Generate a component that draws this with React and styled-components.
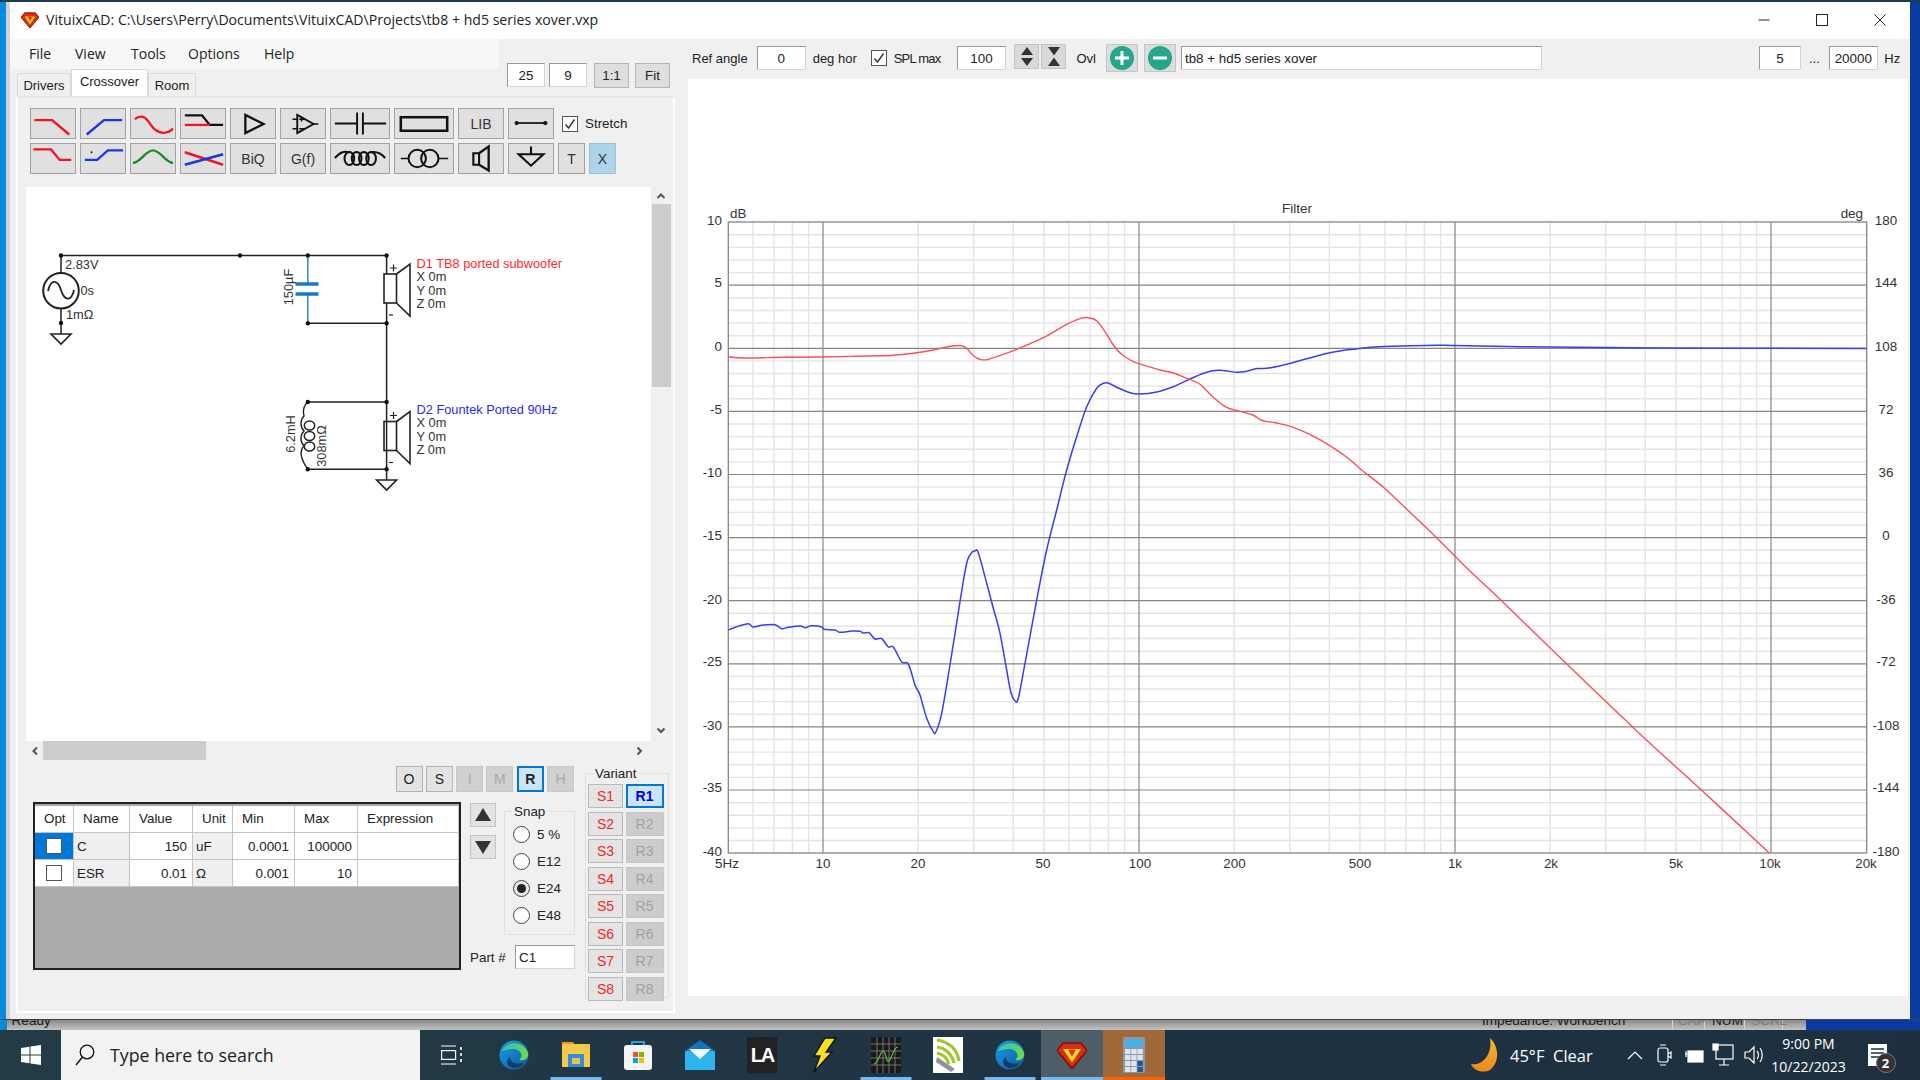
import React from "react";
import styled, { createGlobalStyle } from "styled-components";

const UI = '"Liberation Sans", Arial, sans-serif';
const SEGOE = '"Open Sans", "Noto Sans", sans-serif';

const Global = createGlobalStyle`
  html, body { margin: 0; padding: 0; background: #1c3d4d; overflow: hidden; }
  * { box-sizing: border-box; }
`;

const Screen = styled.div`
  width: 1920px; height: 1080px; display: flex; flex-direction: column;
  overflow: hidden; font-family: ${UI}; font-size: 13.4px; color: #222;
  border-top: 2px solid #1c3d4d; position: relative;
`;
const DesktopRow = styled.div`display: flex; height: 1017px;`;
const LeftStrip = styled.div`width: 10px; background: linear-gradient(90deg, #0a8adb 0 65%, #cfd3d6 65% 100%);`;
const RightStrip = styled.div`flex: 1; background: #0b3aa0;`;
const Win = styled.div`width: 1900px; display: flex; flex-direction: column; background: #f0f0f0;`;

const TitleBar = styled.div`height: 37px; background: #fff; display: flex; align-items: center; padding: 0 0 2px 11px;`;
const TitleText = styled.div`font-family: ${SEGOE}; font-size: 14.1px; color: #222; margin-left: 7px; white-space: nowrap; flex: 1;`;
const WinCtl = styled.div`width: 58px; height: 35px; display: flex; align-items: center; justify-content: center; position: relative; left: -1.5px;`;

const Body = styled.div`flex: 1; display: flex; min-height: 0;`;
const LeftPane = styled.div`width: 668px; display: flex; flex-direction: column;`;
const RightPane = styled.div`flex: 1; display: flex; flex-direction: column; padding-left: 10px;`;

const Head = styled.div`display: flex; height: 57px;`;
const HeadLeft = styled.div`width: 489px; display: flex; flex-direction: column;`;
const MenuBar = styled.div`height: 30px; background: #f7f7f7; display: flex; align-items: center; padding: 0 0 2px 19px; font-family: ${SEGOE}; font-size: 14px;`;
const MenuItem = styled.span`width: ${p => p.$w}px;`;
const Tabs = styled.div`display: flex; align-items: flex-end; padding-left: 7px; height: 27px; position: relative; z-index: 1;`;
const Tab = styled.div`
  width: ${p => p.$w}px; height: ${p => (p.$active ? 27 : 23)}px;
  background: ${p => (p.$active ? "#fff" : "#f0f0f0")};
  border: 1px solid #d9d9d9; border-bottom: none;
  display: flex; align-items: center; justify-content: center; font-size: 13px;
  padding-bottom: ${p => (p.$active ? 3 : 0)}px;
`;
const ZoomTools = styled.div`display: flex; margin: 24px 0 0 8px; align-items: flex-start;`;
const FieldBox = styled.div`
  width: ${p => p.$w}px; height: ${p => p.$h || 24}px; margin-left: ${p => p.$ml || 0}px;
  background: #fff; border: 1px solid #9a9a9a; border-right-color: #d5d5d5; border-bottom-color: #d5d5d5;
  display: flex; align-items: center; justify-content: ${p => p.$left ? "flex-start" : "center"};
  padding-left: ${p => p.$left ? 3 : 0}px; font-size: 13.4px; flex-shrink: 0;
`;
const PlainBtn = styled.div`
  width: ${p => p.$w}px; height: 25px; margin-left: ${p => p.$ml || 0}px;
  background: #dedede; border: 1.5px solid #b4b4b4; display: flex; align-items: center; justify-content: center; font-size: 13.4px;
`;

const Panel = styled.div`
  width: 659px; height: 917px; margin-left: 6px; background: #f0f0f0; border: 2px solid #fff; border-top-color: #e6e6e6;
  display: flex; flex-direction: column;
`;
const ToolRows = styled.div`display: flex; flex-direction: column; gap: 4px; padding: 10px 0 0 12px;`;
const ToolRow = styled.div`display: flex; gap: 4px; height: 31px; align-items: center;`;
const ToolBtn = styled.div`
  width: ${p => p.$w || 46}px; height: 31px; flex-shrink: 0;
  background: ${p => p.$on ? "#add4ea" : "#e0e0e0"}; border: 1.5px solid ${p => p.$on ? "#9fc0d4" : "#a2a2a2"};
  display: flex; align-items: center; justify-content: center; font-size: 14px; color: #333;
  margin-left: ${p => p.$ml || 0}px;
`;
const Stretch = styled.div`display: flex; align-items: center; gap: 7px; margin-left: 4px;`;
const CheckBox = styled.div`
  width: ${p => p.$s || 16}px; height: ${p => p.$s || 16}px; background: #fff; border: 1.5px solid #555;
  margin-left: ${p => p.$ml || 0}px;
  display: flex; align-items: center; justify-content: center; flex-shrink: 0;
`;

const Canvas = styled.div`
  display: grid; grid-template-columns: 625px 20px; grid-template-rows: 554px 19px;
  margin: 13px 0 0 8px; width: 645px;
`;
const Sheet = styled.div`background: #fff; height: 554px; line-height: 0;`;
const VScroll = styled.div`display: flex; flex-direction: column; align-items: center;`;
const ArrowCell = styled.div`width: 20px; height: 17px; display: flex; align-items: center; justify-content: center; margin-top: ${p => p.$auto ? "auto" : 0}; margin-bottom: ${p => p.$auto ? 3 : 0}px;`;
const VThumb = styled.div`width: 19px; height: 183px; background: #cdcdcd;`;
const HScroll = styled.div`display: flex; align-items: stretch;`;
const HArrow = styled.div`width: 17px; display: flex; align-items: center; justify-content: center; margin-left: ${p => p.$auto ? "auto" : 0}; margin-right: ${p => p.$auto ? 4 : 0}px;`;
const HThumb = styled.div`width: 163px; background: #cdcdcd;`;

const Lower = styled.div`display: flex; padding: 6px 0 0 15px; gap: 10px; align-items: flex-start;`;
const LowerLeft = styled.div`width: 542px; display: flex; flex-direction: column;`;
const ModeRow = styled.div`display: flex; justify-content: flex-end; gap: 3.3px; padding-right: 1px;`;
const ModeBtn = styled.div`
  width: 27px; height: 26px;
  background: ${p => p.$sel ? "#cce4f7" : p.$off ? "#d0d0d0" : "#e3e3e3"};
  border: ${p => p.$sel ? "2px solid #0078d7" : "1.5px solid " + (p.$off ? "#c8c8c8" : "#b2b2b2")};
  color: ${p => p.$off ? "#a9a9a9" : "#222"}; font-weight: ${p => p.$sel ? 700 : 400};
  display: flex; align-items: center; justify-content: center; font-size: 14px;
`;
const EditRow = styled.div`display: flex; margin-top: 10px;`;
const GridFrame = styled.div`width: 428px; height: 168px; background: #ababab; border: 2px solid #222; flex-shrink: 0;`;
const Table = styled.div`display: grid; grid-template-columns: 39px 56px 63px 40px 62px 63px 101px; grid-auto-rows: 27px; width: 424px; margin-top: 2px;`;
const Cell = styled.div`
  background: ${p => p.$bg || "#fff"}; border-right: 1.5px solid #c4c4c4; border-bottom: 1.5px solid #c4c4c4;
  display: flex; align-items: center; justify-content: ${p => p.$right ? "flex-end" : p.$center ? "center" : "flex-start"};
  padding: ${p => p.$right ? "0 5px 0 0" : p.$head ? "0 0 2px 9px" : p.$center ? "0" : "0 0 0 3px"};
`;
const Aside = styled.div`width: 105px; margin-left: 9px; display: flex; flex-direction: column;`;
const AsideTop = styled.div`display: flex; height: 133px;`;
const ArrowCol = styled.div`width: 26px; display: flex; flex-direction: column; gap: 8px; padding-top: 1px;`;
const ArrowBtn = styled.div`width: 26px; height: 24px; background: #e3e3e3; border: 1.5px solid #c6c6c6; display: flex; align-items: center; justify-content: center;`;
const Group = styled.fieldset`
  margin: ${p => p.$m || 0}; padding: ${p => p.$p || 0}; border: 1.5px solid #e0e0e0; width: ${p => p.$w}px; height: ${p => p.$h}px; min-width: 0;
`;
const GroupTitle = styled.legend`padding: 0 2px 0 2px; margin-left: ${p => p.$ml}px; font-size: 13.4px; line-height: 15px;`;
const RadioRow = styled.div`display: flex; align-items: center; gap: 7px; height: 27.1px;`;
const RadioDot = styled.div`
  width: 17px; height: 17px; border-radius: 50%; border: 1.5px solid #444; background: ${p => p.$on ? "#e8e8e8" : "#fff"};
  display: flex; align-items: center; justify-content: center;
`;
const RadioFill = styled.div`width: 9px; height: 9px; border-radius: 50%; background: #222;`;
const PartRow = styled.div`display: flex; align-items: center; margin-top: 10px; justify-content: space-between;`;
const VariantGrid = styled.div`display: grid; grid-template-columns: 35px 38px; column-gap: 2.5px; grid-auto-rows: 24px; row-gap: 3.5px; padding: 3px 0 0 2px;`;
const VarBtn = styled.div`
  background: ${p => p.$sel ? "#cce4f7" : p.$off ? "#cccccc" : "#e4e4e4"};
  border: ${p => p.$sel ? "2px solid #0078d7" : "1.5px solid " + (p.$off ? "#c6c6c6" : "#bababa")};
  color: ${p => p.$sel ? "#0000e0" : p.$off ? "#a2a2a2" : "#f02828"}; font-weight: ${p => p.$sel ? 700 : 400};
  display: flex; align-items: center; justify-content: center; font-size: 14px;
`;

const ChartBar = styled.div`height: 40px; display: flex; align-items: center; padding: 0 0 2px 4px; white-space: nowrap;`;
const BarLabel = styled.span`margin-left: ${p => p.$ml || 0}px; font-size: 13px; flex-shrink: 0; letter-spacing: ${p => p.$tight ? "-0.8px" : "normal"};`;
const SpinBtn = styled.div`width: 25px; height: 25px; margin-left: ${p => p.$ml || 0}px; margin-top: -3px; background: #d9d9d9; border: 1px solid #c4c4c4; display: flex; align-items: center; justify-content: center;`;
const RoundBtn = styled.div`width: 32px; height: 28px; margin-left: ${p => p.$ml || 0}px; background: #dcdcdc; border: 1px solid #c4c4c4; display: flex; align-items: center; justify-content: center;`;
const ChartSheet = styled.div`width: 1220px; height: 917px; background: #fff; line-height: 0;`;

const StatusRow = styled.div`height: 11px; display: flex; overflow: hidden; border-top: 1px solid #3f3f3f;`;
const StatusBlue = styled.div`width: ${p => p.$w}px; background: ${p => p.$c};`;
const StatusMain = styled.div`flex: 1; background: linear-gradient(180deg, #8a8a8a, #c2c2c2); display: flex; font-size: 13.6px; color: #222; line-height: 16px; overflow: hidden;`;
const StatusText = styled.span`
  margin-top: -7px; padding-top: 7px; padding-left: ${p => p.$pl || 0}px; height: 24px;
  color: ${p => p.$dim ? "#7d7d7d" : "#1a1a1a"}; white-space: nowrap; width: ${p => p.$w ? p.$w + "px" : "auto"}; flex-shrink: 0;
  border-right: ${p => p.$sep ? "1px solid #d4d4d4" : "none"};
`;
const StatusLabel = styled.span`position: relative; top: -7px;`;

const Taskbar = styled.div`height: 50px; display: flex; background: linear-gradient(90deg, #233b47, #1e3342 60%, #1e3040); color: #fff; align-items: stretch;`;
const StartCell = styled.div`width: 61px; display: flex; align-items: center; justify-content: center;`;
const SearchBox = styled.div`width: 359px; background: #f2f2f2; display: flex; align-items: center; padding-left: 14px; color: #222; font-family: ${SEGOE}; font-size: 17.8px; gap: 15px;`;
const TaskCell = styled.div`
  width: ${p => p.$w || 62}px; display: flex; align-items: center; justify-content: center; position: relative;
  background: ${p => p.$bg || "transparent"}; flex-shrink: 0;
`;
const TaskLine = styled.div`position: absolute; bottom: 0; height: 3px; background: ${p => p.$c || "#76b9ed"}; width: ${p => p.$w}; left: 50%; transform: translateX(-50%);`;
const Tray = styled.div`flex: 1; display: flex; align-items: center; padding-left: 305px; font-family: ${SEGOE};`;
const Weather = styled.span`font-size: 16.5px; margin-left: 10px; width: 110px; white-space: pre;`;
const TrayIcon = styled.div`width: 29.5px; display: flex; justify-content: center;`;
const Clock = styled.div`width: 90px; margin-left: -4px; text-align: center; font-size: 14px; line-height: 23px; margin-top: -1px;`;
const NotifyCell = styled.div`margin-left: 14px; position: relative; display: flex;`;
const Badge = styled.div`
  position: absolute; right: -8px; bottom: -7px; width: 20px; height: 20px; border-radius: 50%; background: #333; border: 1.5px solid #777;
  display: flex; align-items: center; justify-content: center; font-size: 13px; font-weight: 700; color: #fff;
`;

/* ---------- small drawings ---------- */
const Ic = ({ w = 46, h = 31, children }) => <svg width={w} height={h} viewBox={`0 0 ${w} ${h}`} fill="none" strokeLinejoin="miter">{children}</svg>;
const R = "#f5141e", B = "#1438e8", G = "#1a8a2a", K = "#111";
const ic = {
  lp: <Ic><path d="M3.5 12H22L40 27" stroke={R} strokeWidth="2.4" /></Ic>,
  hp: <Ic><path d="M6 27L24 12H43" stroke={B} strokeWidth="2.4" /></Ic>,
  apr: <Ic><path d="M4 11C10 6 15 8 20 16S30 26 36 25S42 22 44 21" stroke={R} strokeWidth="2.4" /></Ic>,
  shelf: <Ic><path d="M4 7H22L30 17H44" stroke={K} strokeWidth="2.4" /><path d="M4 17H30" stroke={R} strokeWidth="2.4" /></Ic>,
  play: <Ic><path d="M15 6.5V25.5L34 16Z" stroke={K} strokeWidth="2.4" /></Ic>,
  amp: <Ic><path d="M17 6.5V25.5L34 16Z" stroke={K} strokeWidth="2" /><path d="M34 16H39M12 11H17M12 21H17M19 11H24M21.5 8.5V13.5M19 21H24" stroke={K} strokeWidth="1.6" /></Ic>,
  cap: <Ic w={60}><path d="M4 15.5H27M27 4V27M33 4V27M33 15.5H57" stroke={K} strokeWidth="2" /></Ic>,
  res: <Ic w={60}><rect x="6" y="9" width="48" height="14" stroke={K} strokeWidth="2.6" /></Ic>,
  wire: <Ic><path d="M8 15H38" stroke={K} strokeWidth="1.8" /><circle cx="8" cy="15" r="2.2" fill={K} /><circle cx="38" cy="15" r="2.2" fill={K} /></Ic>,
  lp2: <Ic><path d="M2.5 6H21L30 17H42" stroke={R} strokeWidth="2.4" /></Ic>,
  hp2: <Ic><path d="M4 17H17L28 7H44" stroke={B} strokeWidth="2.4" /><circle cx="11" cy="9" r="1" fill={K} /></Ic>,
  bell: <Ic><path d="M2 20C10 20 15 7 23 7S36 20 44 20" stroke={G} strokeWidth="2.4" /></Ic>,
  cross: <Ic><path d="M4 9L44 22" stroke={R} strokeWidth="2.6" /><path d="M4 22L44 11" stroke={B} strokeWidth="2.6" /></Ic>,
  coil: <Ic w={60}><path d="M4 15C10 8 14 8 19 9M41 9C47 8 52 10 56 15" stroke={K} strokeWidth="2.1" /><ellipse cx="19" cy="15.5" rx="5" ry="6.8" stroke={K} strokeWidth="2.1" /><ellipse cx="26.5" cy="15.5" rx="5" ry="6.8" stroke={K} strokeWidth="2.1" /><ellipse cx="34" cy="15.5" rx="5" ry="6.8" stroke={K} strokeWidth="2.1" /><ellipse cx="41.5" cy="15.5" rx="5" ry="6.8" stroke={K} strokeWidth="2.1" /></Ic>,
  trafo: <Ic w={60}><circle cx="23" cy="15.5" r="9" stroke={K} strokeWidth="2.1" /><circle cx="36" cy="15.5" r="9" stroke={K} strokeWidth="2.1" /><path d="M6 15.5H14M45 15.5H55" stroke={K} strokeWidth="1.8" /></Ic>,
  spk: <Ic><path d="M15 10H21V22H15Z" stroke={K} strokeWidth="2.2" /><path d="M21 10L31 3V28L21 22" stroke={K} strokeWidth="2.4" /></Ic>,
  gnd: <Ic><path d="M23 3V11M10 11H36L23 23Z" stroke={K} strokeWidth="2.2" /></Ic>,
};
const Chev = ({ d }) => {
  const p = { u: "M1.5 7L5 3.5L8.5 7", d: "M1.5 3.5L5 7L8.5 3.5", l: "M7 1.5L3.5 5L7 8.5", r: "M3.5 1.5L7 5L3.5 8.5" }[d];
  return <svg width="10" height="10" viewBox="0 0 10 10" fill="none"><path d={p} stroke="#555" strokeWidth="2" /></svg>;
};
const Tick = ({ s = 14 }) => <svg width={s} height={s} viewBox="0 0 14 14" fill="none"><path d="M2.5 7.5L5.5 11L11.5 2.5" stroke="#333" strokeWidth="1.4" /></svg>;
const Vituix = ({ s = 18 }) => (
  <svg width={s} height={s} viewBox="0 0 20 20">
    <path d="M4 2H16L20 7L10 19L0 7Z" fill="#e02a12" stroke="#7a1208" strokeWidth="1" />
    <path d="M4 6H16L10 15Z" fill="#f8d820" />
    <path d="M7.5 6.5L10 11L12.5 6.5Z" fill="#e02a12" />
  </svg>
);

/* ---------- schematic ---------- */
const T = ({ children, ...p }) => <text fontFamily={UI} fontSize="12.8" fill="#333" {...p}>{children}</text>;
const Dot = ({ x, y }) => <circle cx={x} cy={y} r="2.2" fill="#111" />;
const DriverSym = ({ y }) => (
  <g fill="none" stroke="#222" strokeWidth="1.6">
    <rect x="384" y={y} width="12.5" height="29" />
    <path d={`M396.5 ${y}L410 ${y - 10}V${y + 42}L396.5 ${y + 29}`} />
    <path d={`M390 ${y - 6}h7M393.5 ${y - 9.5}v7`} strokeWidth="1.2" />
    <path d={`M389 ${y + 41}h4`} strokeWidth="1.2" />
  </g>
);
const Ground = ({ x, y, w }) => <path d={`M${x - w} ${y}H${x + w}L${x} ${y + 10}Z`} fill="#fff" stroke="#222" strokeWidth="1.6" />;
const Schematic = () => (
  <svg width="625" height="554" viewBox="26 187 625 554">
    <g fill="none" stroke="#222" strokeWidth="1.5">
      <path d="M61 255.5H386.6V274M61 255.5V273M61 308.5V334M386.6 303V480M307.8 323.3H386.6M307.8 402H386.6M307.8 469.3H386.6" />
      <circle cx="61" cy="290.7" r="17.8" strokeWidth="2" />
      <path d="M48 291C51 278 58 280 61 290S71 303 74 290" strokeWidth="1.8" />
    </g>
    <Ground x={61} y={334} w={10} />
    <Ground x={386.6} y={480} w={10} />
    <path d="M307.8 255.5V284M307.8 294V323.3" stroke="#2c86c8" strokeWidth="1.5" fill="none" />
    <path d="M295.5 284H318.5M295.5 294H318.5" stroke="#1878c4" strokeWidth="3.6" fill="none" />
    <path d="M307.8 402C303 406 303 412 304 416C300 420 300 427 304 431C300 435 300 442 304 446C300 450 300 458 307.8 469.3" fill="none" stroke="#222" strokeWidth="1.4" />
    <g fill="none" stroke="#222" strokeWidth="1.5">
      <ellipse cx="309.5" cy="425.5" rx="5.2" ry="4.6" /><ellipse cx="309.5" cy="436" rx="5.2" ry="4.6" /><ellipse cx="309.5" cy="446.5" rx="5.2" ry="4.6" />
    </g>
    {[[61, 255.5], [240, 255.5], [307.8, 255.5], [386.6, 255.5], [61, 323], [307.8, 323.3], [386.6, 323.3], [307.8, 402], [386.6, 402], [307.8, 469.3], [386.6, 469.3]].map(([x, y]) => <Dot key={x + "-" + y} x={x} y={y} />)}
    <DriverSym y={274} />
    <DriverSym y={421.5} />
    <T x="65" y="268.5">2.83V</T>
    <T x="80.5" y="295">0s</T>
    <T x="66" y="319">1mΩ</T>
    <T transform="rotate(-90 292.5 287)" x="292.5" y="287" textAnchor="middle">150µF</T>
    <T transform="rotate(-90 295 434)" x="295" y="434" textAnchor="middle">6.2mH</T>
    <T transform="rotate(-90 325.5 446)" x="325.5" y="446" textAnchor="middle">308mΩ</T>
    <T x="416.5" y="268" fill="#ff2a30">D1 TB8 ported subwoofer</T>
    <T x="416.5" y="281">X 0m</T>
    <T x="416.5" y="295">Y 0m</T>
    <T x="416.5" y="308">Z 0m</T>
    <T x="416.5" y="414" fill="#2a2af0">D2 Fountek Ported 90Hz</T>
    <T x="416.5" y="427">X 0m</T>
    <T x="416.5" y="441">Y 0m</T>
    <T x="416.5" y="454">Z 0m</T>
  </svg>
);

/* ---------- chart ---------- */
const fx = f => 823 + 316 * Math.log10(f / 10);
const dy = d => 348.3 - 12.62 * d;
const z7 = ([x, y]) => [700 + x / 3, 190 + y / 3];
const z8 = ([x, y]) => [700 + x / 3, 550 + y / 3];
const z9 = ([x, y]) => [1200 + x / 2.178, 190 + y / 2.178];
const redPts = [
  ...[[85,500],[130,504],[250,502],[370,501],[500,498],[580,496],[640,490],[700,480],[750,469],[785,467],[800,475],[820,497],[840,508],[860,509],[890,500],[950,478],[1030,443],[1100,403],[1140,386],[1165,383],[1190,392],[1215,425],[1240,465],[1265,493],[1300,515],[1318,521],[1380,540],[1420,549],[1460,565]].map(z7),
  ...[[0,423],[25,448],[55,472],[75,479],[115,490],[135,502],[165,507],[200,516],[240,533],[280,555],[320,582],[350,608],[400,648],[450,695],[520,762],[553,795],[590,832],[650,888],[760,995],[950,1177],[1090,1305],[1240,1444]].map(z9),
];
const bluePts = [
  ...[[85,240],[110,230],[145,221],[160,231],[190,225],[225,224],[245,236],[265,232],[300,228],[315,233],[335,227],[365,231],[372,238],[405,240],[420,247],[455,243],[480,244],[490,249],[507,248],[525,267],[545,266],[565,291],[580,291],[605,336],[625,342],[645,405],[660,435],[680,505],[700,545],[708,545],[725,490],[750,345],[780,155],[800,40],[815,8],[825,3],[835,8],[860,100],[880,175],[900,250],[920,360],[932,425],[945,452],[955,445],[975,340],[1010,150],[1040,0]].map(z8),
  ...[[1070,960],[1100,840],[1130,740],[1160,650],[1190,595],[1210,580],[1225,579],[1250,592],[1290,608],[1318,612],[1370,606],[1420,590],[1470,567]].map(z7),
  ...[[0,402],[25,394],[50,393],[80,397],[100,395],[125,389],[150,388],[195,378],[280,355],[340,346],[400,341],[520,338],[553,339],[760,342],[1000,344],[1452,345]].map(z9),
];
const smooth = pts => {
  let d = `M${pts[0][0].toFixed(1)} ${pts[0][1].toFixed(1)}`;
  for (let i = 0; i < pts.length - 1; i++) {
    const a = pts[Math.max(i - 1, 0)], b = pts[i], c = pts[i + 1], e = pts[Math.min(i + 2, pts.length - 1)];
    d += `C${(b[0] + (c[0] - a[0]) / 6).toFixed(1)} ${(b[1] + (c[1] - a[1]) / 6).toFixed(1)} ${(c[0] - (e[0] - b[0]) / 6).toFixed(1)} ${(c[1] - (e[1] - b[1]) / 6).toFixed(1)} ${c[0].toFixed(1)} ${c[1].toFixed(1)}`;
  }
  return d;
};
const freqs = [];
[1, 10, 100, 1000].forEach(m => [1, 2, 3, 4, 5, 6, 7, 8, 9].forEach(k => { const f = k * m; if (f >= 5 && f <= 20000) freqs.push(f); }));
[10000, 20000].forEach(f => freqs.includes(f) || freqs.push(f));
const isMajor = f => [10, 100, 1000, 10000].includes(f);
const CT = ({ children, ...p }) => <text fontFamily={UI} fontSize="13.4" fill="#333" {...p}>{children}</text>;
const dbLabels = [[10, 220], [5, 282.5], [0, 346.5], [-5, 409], [-10, 472.5], [-15, 535.5], [-20, 599], [-25, 661.5], [-30, 725.5], [-35, 787.5], [-40, 851.5]];
const degLabels = ["180", "144", "108", "72", "36", "0", "-36", "-72", "-108", "-144", "-180"];
const xLabels = [["5Hz", 727], ["10", 823], ["20", 918], ["50", 1043], ["100", 1140], ["200", 1234.5], ["500", 1360], ["1k", 1455], ["2k", 1551], ["5k", 1676], ["10k", 1770], ["20k", 1866]];
const Chart = () => {
  const minors = [];
  for (let d = -40; d <= 10; d++) if (d % 5) minors.push(d);
  const maj = [-35, -30, -25, -20, -15, -10, -5, 0, 5];
  return (
    <svg width="1220" height="917" viewBox="688 79 1220 917" fill="none">
      {minors.map(d => <path key={"h" + d} d={`M728 ${dy(d)}H1866.5`} stroke="#e4e4e4" strokeWidth="1.4" />)}
      {freqs.filter(f => !isMajor(f) && f > 5 && f < 20000).map(f => <path key={"v" + f} d={`M${fx(f)} 222V853`} stroke="#e4e4e4" strokeWidth="1.4" />)}
      {maj.map(d => <path key={"H" + d} d={`M728 ${dy(d)}H1866.5`} stroke="#858585" strokeWidth="1.2" />)}
      {[10, 100, 1000, 10000].map(f => <path key={"V" + f} d={`M${fx(f)} 222V853`} stroke="#858585" strokeWidth="1.2" />)}
      <rect x="728.3" y="222" width="1138.4" height="631" stroke="#858585" strokeWidth="1.3" />
      <path d={smooth(bluePts)} stroke="#3c3cf0" strokeWidth="1.5" />
      <path d={smooth(redPts)} stroke="#f8505c" strokeWidth="1.4" />
      {dbLabels.map(([d, y]) => <CT key={d} x="722" y={y + 4.8} textAnchor="end">{d}</CT>)}
      {degLabels.map((t, i) => <CT key={t} x="1886" y={dbLabels[i][1] + 4.8} textAnchor="middle">{t}</CT>)}
      {xLabels.map(([t, x]) => <CT key={t} x={x} y="868" textAnchor="middle">{t}</CT>)}
      <CT x="730" y="217.5">dB</CT>
      <CT x="1297" y="213" textAnchor="middle">Filter</CT>
      <CT x="1863" y="218" textAnchor="end">deg</CT>
    </svg>
  );
};

/* ---------- taskbar icons ---------- */
const Edge = ({ id }) => (
  <svg width="30" height="30" viewBox="0 0 30 30">
    <defs>
      <linearGradient id={id + "A"} x1="0" y1="0" x2="1" y2="1"><stop offset="0" stopColor="#1b9de2" /><stop offset="1" stopColor="#0c59a4" /></linearGradient>
      <linearGradient id={id + "B"} x1="0" y1="0" x2="1" y2="0.6"><stop offset="0" stopColor="#2fc3b0" /><stop offset="1" stopColor="#6fd84f" /></linearGradient>
    </defs>
    <circle cx="15" cy="15" r="14.5" fill={`url(#${id}A)`} />
    <path d="M3 11C6 2 24 -1 29 13C30 19 25 21 20 20C26 15 20 9 15 9C9 9 6 10 3 11Z" fill={`url(#${id}B)`} />
    <path d="M11 17C11 23 18 25 25 23C22 28 14 30 10 26C7 23 8 19 11 17Z" fill="#123c6a" />
  </svg>
);
const Folder = () => (
  <svg width="28" height="30" viewBox="0 0 28 30">
    <path d="M0 2H11L13 5H0Z" fill="#e59a1c" /><rect y="4" width="28" height="23" rx="1" fill="#f6c94a" />
    <rect x="6" y="14" width="16" height="13" fill="#2f8fd6" /><rect x="10" y="18" width="8" height="6" fill="#f0c040" />
  </svg>
);
const Store = () => (
  <svg width="28" height="30" viewBox="0 0 28 30">
    <path d="M8 6V2H20V6" fill="none" stroke="#2a9fd8" strokeWidth="2" /><rect y="5" width="28" height="25" rx="3" fill="#f4f4f4" />
    <rect x="9" y="12" width="5" height="5" fill="#f25022" /><rect x="15" y="12" width="5" height="5" fill="#7fba00" />
    <rect x="9" y="18" width="5" height="5" fill="#00a4ef" /><rect x="15" y="18" width="5" height="5" fill="#ffb900" />
  </svg>
);
const Mail = () => (
  <svg width="30" height="30" viewBox="0 0 30 30">
    <path d="M0 11L15 0L30 11V30H0Z" fill="#1272c4" /><path d="M0 11H30V30H0Z" fill="#2fb5ee" /><path d="M4 9H26L15 19Z" fill="#f4f8fb" />
  </svg>
);
const LABlock = styled.div`width: 30px; height: 36px; background: #222; display: flex; align-items: center; justify-content: center; color: #fff; font: 700 20px/1 ${UI}; letter-spacing: -2px;`;
const Bolt = () => (
  <svg width="26" height="36" viewBox="0 0 26 36"><path d="M14 1H25L15 15H21L3 35L9 19H3Z" fill="#f8e020" stroke="#111" strokeWidth="1.3" /></svg>
);
const Scope = () => (
  <svg width="30" height="36" viewBox="0 0 30 36">
    <rect width="30" height="36" fill="#1a1a1a" />
    <path d="M0 7H30M0 14H30M0 21H30M0 28H30M6 0V36M12 0V36M18 0V36M24 0V36" stroke="#888" strokeWidth="0.8" />
    <path d="M3 27C8 26 9 14 12 14S15 26 18 24S22 10 27 10" stroke="#5fc24a" strokeWidth="1.2" fill="none" />
  </svg>
);
const Sniff = () => (
  <svg width="30" height="36" viewBox="0 0 30 36">
    <rect width="30" height="36" fill="#fff" />
    <path d="M4 3C16 5 24 12 26 24M4 10C12 11 19 17 21 26M4 16C9 17 14 21 16 27" stroke="#a0c82a" strokeWidth="3.2" fill="none" />
    <path d="M4 20L22 32L18 35L3 25Z" fill="#8e9498" />
  </svg>
);
const Calc = () => (
  <svg width="22" height="36" viewBox="0 0 22 36">
    <rect width="22" height="36" rx="1" fill="#8a99a6" /><rect x="2" y="3" width="18" height="7" fill="#3fb5ea" />
    {[12, 18, 24, 30].map(y => [2, 8.2, 14.4].map(x => <rect key={x + "-" + y} x={x} y={y} width="5.4" height="5" fill={x > 14 && y > 20 ? "#24559a" : "#dfe4e8"} />))}
  </svg>
);
const Moon = () => (
  <svg width="30" height="36" viewBox="0 0 30 36">
    <defs><linearGradient id="moonG" x1="0" y1="0" x2="0" y2="1"><stop offset="0" stopColor="#f7b23c" /><stop offset="1" stopColor="#e98a1e" /></linearGradient></defs>
    <path d="M20 1C29 9 30 25 20 33C12 37 3 33 1 27C11 29 23 19 20 1Z" fill="url(#moonG)" />
  </svg>
);
const Thin = ({ w = 22, h = 24, children }) => <svg width={w} height={h} viewBox={`0 0 ${w} ${h}`} fill="none" stroke="#fff" strokeWidth="1.2">{children}</svg>;

const CELLS_ROW1 = ["lp", "hp", "apr", "shelf", "play", "amp"];
const CELLS_ROW2 = ["lp2", "hp2", "bell", "cross"];
const COLS = ["Opt", "Name", "Value", "Unit", "Min", "Max", "Expression"];
const VARIANTS = [1, 2, 3, 4, 5, 6, 7, 8];

export default function App() {
  return (
    <Screen>
      <Global />
      <DesktopRow>
        <LeftStrip />
        <Win>
          <TitleBar>
            <Vituix />
            <TitleText>VituixCAD: C:\Users\Perry\Documents\VituixCAD\Projects\tb8 + hd5 series xover.vxp</TitleText>
            <WinCtl><svg width="12" height="12"><path d="M0.5 6H11.5" stroke="#222" /></svg></WinCtl>
            <WinCtl><svg width="12" height="12"><rect x="0.5" y="0.5" width="11" height="11" fill="none" stroke="#222" /></svg></WinCtl>
            <WinCtl><svg width="12" height="12"><path d="M0.5 0.5L11.5 11.5M11.5 0.5L0.5 11.5" stroke="#222" /></svg></WinCtl>
          </TitleBar>
          <Body>
            <LeftPane>
              <Head>
                <HeadLeft>
                  <MenuBar>
                    <MenuItem $w={46}>File</MenuItem>
                    <MenuItem $w={56}>View</MenuItem>
                    <MenuItem $w={57}>Tools</MenuItem>
                    <MenuItem $w={76}>Options</MenuItem>
                    <MenuItem $w={40}>Help</MenuItem>
                  </MenuBar>
                  <Tabs>
                    <Tab $w={54}>Drivers</Tab>
                    <Tab $w={77} $active>Crossover</Tab>
                    <Tab $w={48}>Room</Tab>
                  </Tabs>
                </HeadLeft>
                <ZoomTools>
                  <FieldBox $w={38}>25</FieldBox>
                  <FieldBox $w={38} $ml={4}>9</FieldBox>
                  <PlainBtn $w={35} $ml={7}>1:1</PlainBtn>
                  <PlainBtn $w={35} $ml={6}>Fit</PlainBtn>
                </ZoomTools>
              </Head>
              <Panel>
                <ToolRows>
                  <ToolRow>
                    {CELLS_ROW1.map(k => <ToolBtn key={k}>{ic[k]}</ToolBtn>)}
                    <ToolBtn $w={60}>{ic.cap}</ToolBtn>
                    <ToolBtn $w={60}>{ic.res}</ToolBtn>
                    <ToolBtn>LIB</ToolBtn>
                    <ToolBtn>{ic.wire}</ToolBtn>
                    <Stretch><CheckBox><Tick /></CheckBox>Stretch</Stretch>
                  </ToolRow>
                  <ToolRow>
                    {CELLS_ROW2.map(k => <ToolBtn key={k}>{ic[k]}</ToolBtn>)}
                    <ToolBtn>BiQ</ToolBtn>
                    <ToolBtn>G(f)</ToolBtn>
                    <ToolBtn $w={60}>{ic.coil}</ToolBtn>
                    <ToolBtn $w={60}>{ic.trafo}</ToolBtn>
                    <ToolBtn>{ic.spk}</ToolBtn>
                    <ToolBtn>{ic.gnd}</ToolBtn>
                    <ToolBtn $w={27}>T</ToolBtn>
                    <ToolBtn $w={27} $on>X</ToolBtn>
                  </ToolRow>
                </ToolRows>
                <Canvas>
                  <Sheet><Schematic /></Sheet>
                  <VScroll>
                    <ArrowCell><Chev d="u" /></ArrowCell>
                    <VThumb />
                    <ArrowCell $auto><Chev d="d" /></ArrowCell>
                  </VScroll>
                  <HScroll>
                    <HArrow><Chev d="l" /></HArrow>
                    <HThumb />
                    <HArrow $auto><Chev d="r" /></HArrow>
                  </HScroll>
                </Canvas>
                <Lower>
                  <LowerLeft>
                    <ModeRow>
                      <ModeBtn>O</ModeBtn>
                      <ModeBtn>S</ModeBtn>
                      <ModeBtn $off>I</ModeBtn>
                      <ModeBtn $off>M</ModeBtn>
                      <ModeBtn $sel>R</ModeBtn>
                      <ModeBtn $off>H</ModeBtn>
                    </ModeRow>
                    <EditRow>
                      <GridFrame>
                        <Table>
                          {COLS.map(c => <Cell key={c} $head>{c}</Cell>)}
                          <Cell $center $bg="#0078d7"><CheckBox $s={16} /></Cell>
                          <Cell $bg="#efefef">C</Cell>
                          <Cell $right>150</Cell>
                          <Cell $bg="#efefef">uF</Cell>
                          <Cell $right>0.0001</Cell>
                          <Cell $right>100000</Cell>
                          <Cell />
                          <Cell $center><CheckBox $s={16} /></Cell>
                          <Cell $bg="#efefef">ESR</Cell>
                          <Cell $right>0.01</Cell>
                          <Cell $bg="#efefef">Ω</Cell>
                          <Cell $right>0.001</Cell>
                          <Cell $right>10</Cell>
                          <Cell />
                        </Table>
                      </GridFrame>
                      <Aside>
                        <AsideTop>
                          <ArrowCol>
                            <ArrowBtn><svg width="16" height="14"><path d="M8 0L16 13H0Z" fill="#333" /></svg></ArrowBtn>
                            <ArrowBtn><svg width="16" height="14"><path d="M8 14L16 1H0Z" fill="#333" /></svg></ArrowBtn>
                          </ArrowCol>
                          <Group $w={72} $h={131} $m="2px 0 0 8px" $p="2px 0 0 8px">
                            <GroupTitle $ml={-1}>Snap</GroupTitle>
                            <RadioRow><RadioDot />5 %</RadioRow>
                            <RadioRow><RadioDot />E12</RadioRow>
                            <RadioRow><RadioDot $on><RadioFill /></RadioDot>E24</RadioRow>
                            <RadioRow><RadioDot />E48</RadioRow>
                          </Group>
                        </AsideTop>
                        <PartRow>Part #<FieldBox $w={60} $left>C1</FieldBox></PartRow>
                      </Aside>
                    </EditRow>
                  </LowerLeft>
                  <Group $w={84} $h={232} $m="0" $p="0">
                    <GroupTitle $ml={7}>Variant</GroupTitle>
                    <VariantGrid>
                      {VARIANTS.map(n => (
                        <React.Fragment key={n}>
                          <VarBtn>S{n}</VarBtn>
                          <VarBtn $sel={n === 1} $off={n !== 1}>R{n}</VarBtn>
                        </React.Fragment>
                      ))}
                    </VariantGrid>
                  </Group>
                </Lower>
              </Panel>
            </LeftPane>
            <RightPane>
              <ChartBar>
                <BarLabel>Ref angle</BarLabel>
                <FieldBox $w={49} $ml={9}>0</FieldBox>
                <BarLabel $ml={7}>deg hor</BarLabel>
                <CheckBox $s={16} $ml={14}><Tick /></CheckBox>
                <BarLabel $ml={7} $tight>SPL max</BarLabel>
                <FieldBox $w={49} $ml={16.5}>100</FieldBox>
                <SpinBtn $ml={8.5}><svg width="14" height="21"><path d="M7 1L13 9H1ZM7 20L13 12H1Z" fill="#333" /></svg></SpinBtn>
                <SpinBtn $ml={2}><svg width="14" height="21"><path d="M1 1H13L7 9.5ZM1 20H13L7 11.5Z" fill="#333" /></svg></SpinBtn>
                <BarLabel $ml={10}>Ovl</BarLabel>
                <RoundBtn $ml={10}><svg width="24" height="24"><circle cx="12" cy="12" r="12" fill="#25a58a" /><path d="M12 5V19M5 12H19" stroke="#fff" strokeWidth="3" /></svg></RoundBtn>
                <RoundBtn $ml={6}><svg width="24" height="24"><circle cx="12" cy="12" r="12" fill="#25a58a" /><path d="M5 12H19" stroke="#fff" strokeWidth="3" /></svg></RoundBtn>
                <FieldBox $w={361} $ml={5} $left>tb8 + hd5 series xover</FieldBox>
                <FieldBox $w={42} $ml={217}>5</FieldBox>
                <BarLabel $ml={8}>...</BarLabel>
                <FieldBox $w={49} $ml={9}>20000</FieldBox>
                <BarLabel $ml={6.5}>Hz</BarLabel>
              </ChartBar>
              <ChartSheet><Chart /></ChartSheet>
            </RightPane>
          </Body>
        </Win>
        <RightStrip />
      </DesktopRow>
      <StatusRow>
        <StatusBlue $w={6.5} $c="#0a8adb" />
        <StatusMain>
          <StatusText $pl={5} $w={1475.5}><StatusLabel>Ready</StatusLabel></StatusText>
          <StatusText $w={191} $sep><StatusLabel>Impedance: Workbench</StatusLabel></StatusText>
          <StatusText $pl={5} $dim $w={32} $sep><StatusLabel>CAP</StatusLabel></StatusText>
          <StatusText $pl={7} $w={40} $sep><StatusLabel>NUM</StatusLabel></StatusText>
          <StatusText $pl={6} $dim $w={38} $sep><StatusLabel>SCRL</StatusLabel></StatusText>
        </StatusMain>
        <StatusBlue $w={114} $c="#0b3aa0" />
      </StatusRow>
      <Taskbar>
        <StartCell>
          <svg width="20" height="20" viewBox="0 0 20 20" fill="#fff"><path d="M0 3L8.5 1.7V9.5H0ZM9.5 1.5L20 0V9.5H9.5ZM0 10.5H8.5V18.3L0 17ZM9.5 10.5H20V20L9.5 18.5Z" /></svg>
        </StartCell>
        <SearchBox>
          <svg width="20" height="22" viewBox="0 0 20 22" fill="none" stroke="#111" strokeWidth="1.3"><circle cx="12" cy="8" r="6.8" /><path d="M7.5 13L1 21" /></svg>
          Type here to search
        </SearchBox>
        <TaskCell $w={63}>
          <svg width="22" height="20" viewBox="0 0 22 20" fill="none" stroke="#fff" strokeWidth="1.2"><path d="M0 1H15M0 19H15" /><rect x="0.6" y="5.6" width="14" height="8.8" /><path d="M20 2V5M20 8V11M20 14V17" strokeWidth="1.6" /></svg>
        </TaskCell>
        <TaskCell><Edge id="edge1" /></TaskCell>
        <TaskCell><Folder /><TaskLine $w="51px" /></TaskCell>
        <TaskCell><Store /></TaskCell>
        <TaskCell><Mail /></TaskCell>
        <TaskCell><LABlock>LA</LABlock></TaskCell>
        <TaskCell><Bolt /></TaskCell>
        <TaskCell><Scope /><TaskLine $w="51px" /></TaskCell>
        <TaskCell><Sniff /></TaskCell>
        <TaskCell><Edge id="edge2" /><TaskLine $w="51px" /></TaskCell>
        <TaskCell $bg="#4d5e69"><Vituix s={30} /><TaskLine $w="100%" /></TaskCell>
        <TaskCell $bg="#a0693a"><Calc /><TaskLine $w="100%" $c="#f7630c" /></TaskCell>
        <Tray>
          <Moon />
          <Weather>45°F  Clear</Weather>
          <TrayIcon><Thin w={16} h={10}><path d="M1 9L8 2L15 9" /></Thin></TrayIcon>
          <TrayIcon><Thin w={16} h={24}><rect x="2" y="5" width="10" height="14" rx="2" /><path d="M4 2H10M4 22H10M12 11L15 9V15L12 13" /></Thin></TrayIcon>
          <TrayIcon><Thin w={20} h={20}><rect x="4" y="6" width="15" height="11" fill="#fff" /><path d="M1 9H4M2 6V12" /></Thin></TrayIcon>
          <TrayIcon><Thin w={22} h={24}><rect x="4" y="2" width="17" height="14" /><rect x="1" y="1" width="5" height="6" fill="#fff" /><path d="M12 16V22M7 22H17" /></Thin></TrayIcon>
          <TrayIcon><Thin w={20} h={22}><path d="M2 8H6L11 3V19L6 14H2ZM14 7C16 9 16 13 14 15M17 4C20 8 20 14 17 18" /></Thin></TrayIcon>
          <Clock>9:00 PM<br />10/22/2023</Clock>
          <NotifyCell>
            <svg width="20" height="22" viewBox="0 0 20 22"><path d="M0 0H19V15L14 22H0Z" fill="#fff" /><path d="M3 5H16M3 9H16M3 13H12" stroke="#1e3040" strokeWidth="1.4" /></svg>
            <Badge>2</Badge>
          </NotifyCell>
        </Tray>
      </Taskbar>
    </Screen>
  );
}
